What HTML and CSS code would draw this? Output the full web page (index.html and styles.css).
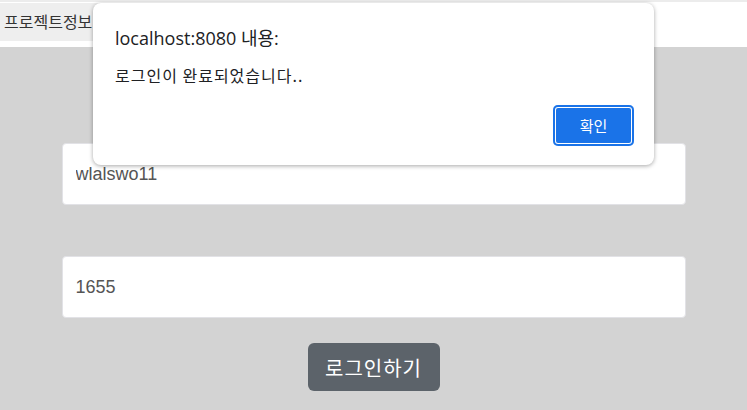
FILE: index.html
```html
<!DOCTYPE html>
<html>
	<head>
		<title>로그인</title>
		<meta charset="utf-8" />
		<link rel="stylesheet" href="styles.css">
	</head>
<body>
	<div id="header">
		<a class="navlink" href="#">프로젝트정보</a>
	</div>
	<div id="loginbox">
		<input type="text" class="field" value="wlalswo11">
		<input type="text" class="field second" value="1655">
		<button class="loginbutt">로그인하기</button>
	</div>
	<div id="alertbox">
		<div class="alerttitle">localhost:8080 내용:</div>
		<div class="alertmsg">로그인이 완료되었습니다..</div>
		<div class="alertbar">
			<button class="okbutt">확인</button>
		</div>
	</div>
</body>
</html>
```
FILE: styles.css
```css
body {
	margin: 0;
	background-color: #d3d3d3;
	font-family: "Noto Sans CJK KR", "Noto Sans", sans-serif;
}
div#header {
	height: 45px;
	background-color: white;
	border-top: 2px solid #ececec;
	display: flex;
	align-items: flex-start;
}
a.navlink {
	display: block;
	height: 38px;
	line-height: 37px;
	margin-top: 1px;
	padding: 0 14px 0 4px;
	background-color: #eeeeee;
	color: #333;
	font-size: 16px;
	text-decoration: none;
	border-radius: 0 6px 6px 0;
}
div#loginbox {
	display: flex;
	flex-direction: column;
	align-items: center;
	padding-top: 96px;
}
input.field {
	box-sizing: border-box;
	width: 624px;
	height: 62px;
	padding: 0 13px;
	border: 1px solid #e2e2e6;
	border-radius: 4px;
	background-color: white;
	font-family: "Liberation Sans", Arial, sans-serif;
	font-size: 18px;
	color: #555;
}
input.second {
	margin-top: 51px;
}
button.loginbutt {
	margin-top: 25px;
	width: 132px;
	height: 48px;
	border: none;
	border-radius: 6px;
	background-color: #5c636a;
	color: white;
	font-family: "Noto Sans CJK KR", sans-serif;
	font-size: 20px;
	letter-spacing: 1px;
}
div#alertbox {
	position: absolute;
	left: 93px;
	top: 3px;
	width: 561px;
	height: 162px;
	box-sizing: border-box;
	padding: 22px 20px 19px 22px;
	background-color: white;
	border-radius: 8px;
	box-shadow: 0 1px 4px rgba(0,0,0,0.35);
	display: flex;
	flex-direction: column;
}
div.alerttitle {
	font-family: "Open Sans", "Noto Sans CJK KR", sans-serif;
	font-size: 18px;
	line-height: 26px;
	color: #202124;
}
div.alertmsg {
	margin-top: 14px;
	font-size: 16px;
	line-height: 20px;
	letter-spacing: 1px;
	color: #202124;
}
div.alertbar {
	margin-top: auto;
	display: flex;
	justify-content: flex-end;
}
button.okbutt {
	width: 81px;
	height: 41px;
	border: none;
	border-radius: 5px;
	background-color: #1a73e8;
	box-shadow: inset 0 0 0 2px #1a73e8, inset 0 0 0 3px white;
	color: white;
	font-family: "Noto Sans CJK KR", sans-serif;
	font-size: 15px;
}
```
